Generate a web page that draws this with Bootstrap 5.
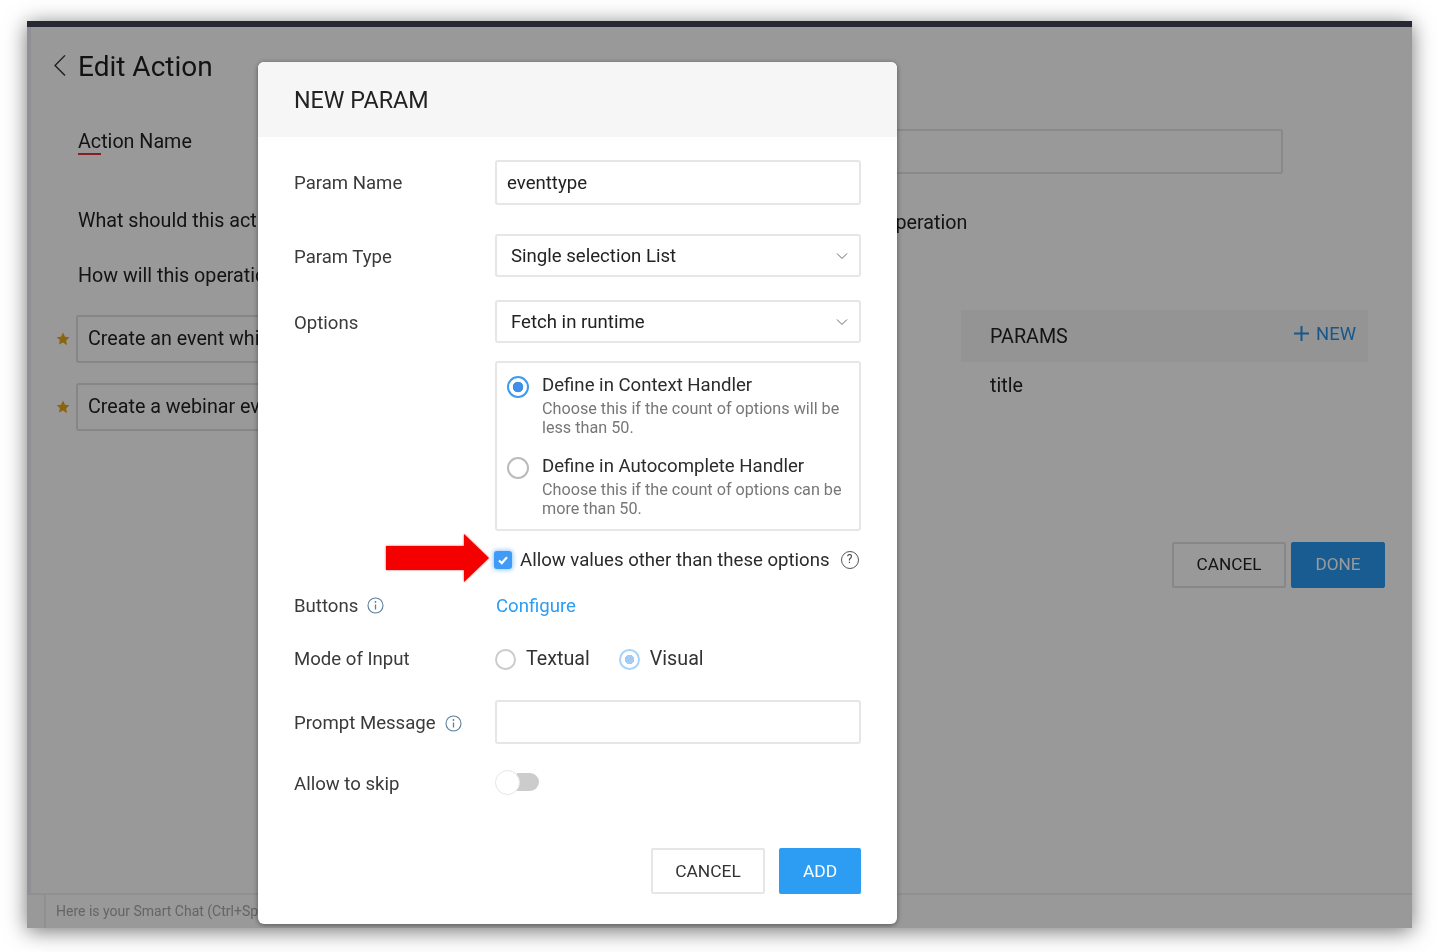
<!DOCTYPE html>
<html lang="en">
<head>
<meta charset="utf-8">
<title>New Param</title>
<link rel="stylesheet" href="https://cdn.jsdelivr.net/npm/bootstrap@5.3.0/dist/css/bootstrap.min.css">
<style>
html,body{height:100%;background:#fff;overflow:hidden}
body{font-family:Roboto,"Liberation Sans",sans-serif;font-size:18.6px;color:#333}
.app-window{position:relative;width:1385px;height:907px;margin:21px 0 0 27px;background:#fff;box-shadow:0 3px 20px rgba(0,0,0,.55);overflow:hidden;filter:blur(.4px)}
.top-strip{height:6px;background:#414355}
.app-main{height:866px;border-left:4px solid #eef0f8;padding-left:47px;color:#222;font-size:19.7px}
.page-head{height:79px;padding-top:23px;margin-left:-26px;gap:11px}
.page-head h1{font-size:28px;font-weight:400;line-height:34px;margin:0;color:#1f1f1f}
.bg-row-name{margin-top:23px;height:45px}
.bg-row-name .bg-input{margin-left:auto;margin-right:129px;width:950px;height:45px;border:2px solid #e4e4e4;border-radius:3px}
.name-label{line-height:24px;margin-top:1px}
.underlined{border-bottom:2px solid #e03535}
.bg-row-what{margin-top:35px;line-height:24px;height:24px}
.what-text{flex:0 0 804px;white-space:nowrap}
.bg-op{margin-top:2px}
.bg-row-how{margin-top:31px;line-height:24px;height:24px;white-space:nowrap}
.bg-split{margin-top:22px;margin-left:-22px}
.bg-left{width:230px}
.sample-row{height:48px;margin-top:5px;gap:6px;margin-bottom:20px}
.sample-star{flex:none;width:14px;height:14px}
.sample-box{flex:0 0 300px;height:48px;border:2px solid #e0e0e0;border-radius:3px;padding-left:10px;line-height:44px;white-space:nowrap}
.bg-right{margin-left:675px;width:407px}
.params-head{height:52px;background:#f7f7f9;padding:2px 12px 0 29px}
.params-new{color:#2a92e6;font-size:18.4px;gap:7px;margin-top:-6px}
.param-item{padding:12px 0 0 29px;line-height:24px}
.bg-actions{margin-top:91px;margin-right:27px;gap:5px}
.bg-actions .btn{height:46px;font-size:17.2px;border-radius:2px}
.btn-ghost{background:#fff;color:#222;border:2px solid #e2e2e2;width:114px}
.btn-done{background:#2a9af3;border-color:#2a9af3;color:#fff;width:94px}
.chat-bar{height:35px;border-top:2px solid #f0f0f0;color:#a8a8a8;font-size:14px}
.chat-cell{width:19px;border-right:2px solid #f0f0f0;height:100%}
.chat-text{padding-left:10px;line-height:33px;white-space:nowrap}
.dim-layer{position:absolute;inset:0;background:rgba(0,0,0,.4)}
.param-modal{position:absolute;left:231px;top:41px;width:639px;height:862px;background:#fff;border-radius:6px;box-shadow:0 1px 5px rgba(0,0,0,.45);overflow:hidden;color:#333}
.param-head{height:75px;background:#f6f6f6;padding-left:36px;font-size:23.3px;line-height:76px;color:#222}
.param-body{padding:0 36px}
.f-row{position:relative;display:flex;align-items:center}
.f-label{flex:0 0 201px;color:#3a3a3a;display:flex;align-items:center;gap:9px;line-height:24px}
.f-field{width:366px}
.mt-a{margin-top:23px}.mt-b{margin-top:29px}.mt-c{margin-top:18px}.mt-d{margin-top:19px}.mt-e{margin-top:23px}.mt-f{margin-top:29px}.mt-g{margin-top:29px}.mt-h{margin-top:28px}.mt-i{margin-top:52px}
.nudge{padding-top:2px}
.form-control.tx{height:45px;font-size:18.6px;color:#222;border:2px solid #e6e6e6;border-radius:3px;padding:0 10px;box-shadow:none}
.form-select.sel{height:43px;font-size:18.6px;color:#222;border:2px solid #e6e6e6;border-radius:3px;padding:2px 14px 0;background-size:12px 8px;background-position:right 11px center;background-image:url("data:image/svg+xml,%3csvg xmlns='http://www.w3.org/2000/svg' viewBox='0 0 12 8'%3e%3cpath fill='none' stroke='%23666' stroke-width='1' d='M1 1.5l5 5 5-5'/%3e%3c/svg%3e")}
.tx-h{height:44px!important}
.radio-box{height:170px;border:2px solid #e6e6e6;border-radius:3px;padding:11px 10px 0 10px}
.radio-item{display:flex;gap:13px;margin-bottom:18px}
.radio-title{font-size:18.6px;line-height:22px;color:#2b2b2b}
.radio-desc{font-size:16.2px;line-height:19px;color:#777;margin-top:3px}
.form-check-input.rd{flex:none;width:22px;height:22px;margin:2px 0 0;border:2px solid #bbb;background-color:#fff;box-shadow:none}
.form-check-input.rd:checked{border-color:#3f9bf0;background-color:#fff;background-image:radial-gradient(circle,#3f8fe8 0 5px,transparent 5.6px)}
.form-check-input.rd.rd-s{width:21px;height:21px;margin:0;border-color:#ccc}
.form-check-input.rd.rd-s:checked{border-color:#a9d2f8;background-image:radial-gradient(circle,#a5cbf3 0 4.5px,transparent 5px)}
.form-check-input.chk{flex:none;width:18px;height:18px;margin:0 8px 0 -1px;border:0;border-radius:3px;background-color:#3f9bf5;box-shadow:0 0 4px 1px rgba(63,155,245,.55);background-image:url("data:image/svg+xml,%3csvg xmlns='http://www.w3.org/2000/svg' viewBox='0 0 18 18'%3e%3cpath fill='none' stroke='%23fff' stroke-width='2.2' d='M5 9.5l2.8 2.6L13 6.3'/%3e%3c/svg%3e");background-size:18px 18px}
.allow-text{color:#2b2b2b;line-height:20px;white-space:nowrap}
.q-mark{flex:none;width:18px;height:18px;border:1.5px solid #555;border-radius:50%;font-size:12px;line-height:15px;text-align:center;color:#444;margin-left:11px}
.cfg-link{display:block;color:#2a9df4;text-decoration:none;margin-left:1px;padding-top:1px;line-height:24px}
.mode-opt{display:flex;align-items:center;gap:10px;margin-right:29px;line-height:24px;color:#333;font-size:19.7px}
.info-ic{flex:none;width:17px;height:17px}
.f-skip{margin-top:-4px}
.skip-wrap{height:24px;width:44px;position:relative}
.skip-track{position:absolute;left:22px;right:0;top:3px;height:18px;background:#ccc;border-radius:0 9px 9px 0}
.skip-knob{position:absolute;left:0;top:0;width:25px;height:25px;border-radius:50%;background:#fff;border:1.5px solid #e4e4e4}
.modal-actions{display:flex;justify-content:flex-end;gap:14px}
.modal-actions .btn{height:46px;font-size:17.4px;border-radius:2px}
.btn-c{width:114px;background:#fff;color:#333;border:2px solid #e6e6e6}
.btn-a{width:82px;background:#2d9cf3;color:#fff;border:0}
.red-arrow{position:absolute;left:92px;top:-16px;width:103px;height:48px;filter:drop-shadow(0 0 1px rgba(120,0,0,.6))}
</style>
</head>
<body>
<div class="app-window">
  <div class="top-strip"></div>
  <main class="app-main">
    <div class="page-head d-flex align-items-start">
      <svg width="15" height="22" viewBox="0 0 15 24" preserveAspectRatio="none" class="mt-1"><path d="M13 1.5 3 12.500l10 11" fill="none" stroke="#333" stroke-width="1.4"/></svg>
      <h1>Edit Action</h1>
    </div>
    <div class="bg-row-name d-flex align-items-start">
      <span class="name-label"><span class="underlined">Ac</span>tion Name</span>
      <div class="bg-input"></div>
    </div>
    <div class="bg-row-what d-flex align-items-start"><span class="what-text">What should this action do?</span><span class="bg-op">Operation</span></div>
    <div class="bg-row-how">How will this operation</div>
    <div class="bg-split d-flex">
      <div class="bg-left">
        <div class="sample-row d-flex align-items-center">
          <svg class="sample-star" viewBox="0 0 24 24"><path fill="#e5a817" d="M12 1l3.400 7.200 7.600 1-5.600 5.400 1.400 7.900L12 17.800 5.200 21.500l1.400-7.900L1 9.200l7.600-1z"/></svg>
          <div class="sample-box">Create an event which</div>
        </div>
        <div class="sample-row d-flex align-items-center">
          <svg class="sample-star" viewBox="0 0 24 24"><path fill="#e5a817" d="M12 1l3.400 7.200 7.600 1-5.600 5.400 1.400 7.900L12 17.800 5.200 21.500l1.400-7.900L1 9.200l7.600-1z"/></svg>
          <div class="sample-box">Create a webinar event</div>
        </div>
      </div>
      <div class="bg-right">
        <div class="params-head d-flex align-items-center justify-content-between">
          <span>PARAMS</span>
          <span class="params-new d-flex align-items-center"><svg width="15" height="15" viewBox="0 0 15 15"><path d="M7.500 0v15M0 7.500h15" stroke="#2a92e6" stroke-width="2"/></svg>NEW</span>
        </div>
        <div class="param-item">title</div>
      </div>
    </div>
    <div class="bg-actions d-flex justify-content-end">
      <button type="button" class="btn btn-ghost">CANCEL</button>
      <button type="button" class="btn btn-done">DONE</button>
    </div>
  </main>
  <div class="chat-bar d-flex">
    <div class="chat-cell"></div>
    <div class="chat-text">Here is your Smart Chat (Ctrl+Space)</div>
  </div>
  <div class="dim-layer"></div>

  <div class="param-modal">
    <div class="param-head">NEW PARAM</div>
    <div class="param-body">
      <div class="f-row mt-a">
        <label class="f-label">Param Name</label>
        <div class="f-field"><input class="form-control tx" type="text" value="eventtype"></div>
      </div>
      <div class="f-row mt-b">
        <label class="f-label nudge">Param Type</label>
        <div class="f-field"><select class="form-select sel"><option>Single selection List</option></select></div>
      </div>
      <div class="f-row mt-a">
        <label class="f-label nudge">Options</label>
        <div class="f-field"><select class="form-select sel"><option>Fetch in runtime</option></select></div>
      </div>
      <div class="f-row mt-c">
        <div class="f-label"></div>
        <div class="f-field radio-box">
          <div class="radio-item">
            <input class="form-check-input rd" type="radio" name="src" checked>
            <div><div class="radio-title">Define in Context Handler</div><div class="radio-desc">Choose this if the count of options will be less than 50.</div></div>
          </div>
          <div class="radio-item">
            <input class="form-check-input rd" type="radio" name="src">
            <div><div class="radio-title">Define in Autocomplete Handler</div><div class="radio-desc">Choose this if the count of options can be more than 50.</div></div>
          </div>
        </div>
      </div>
      <div class="f-row mt-d">
        <div class="f-label"></div>
        <div class="f-field d-flex align-items-center">
          <input class="form-check-input chk" type="checkbox" checked>
          <span class="allow-text">Allow values other than these options</span>
          <span class="q-mark">?</span>
        </div>
        <svg class="red-arrow" viewBox="0 0 103 48"><path fill="#f40000" d="M0 12h78V0l25 24-25 24V36H0z"/></svg>
      </div>
      <div class="f-row mt-e">
        <div class="f-label">Buttons
          <svg class="info-ic" viewBox="0 0 17 17"><circle cx="8.500" cy="8.500" r="7.500" fill="none" stroke="#5d7f99" stroke-width="1.100"/><path d="M8.500 7.500v5" stroke="#5d7f99" stroke-width="1.300"/><circle cx="8.500" cy="5" r=".9" fill="#5d7f99"/></svg>
        </div>
        <div class="f-field"><a class="cfg-link" href="#">Configure</a></div>
      </div>
      <div class="f-row mt-f">
        <div class="f-label">Mode of Input</div>
        <div class="f-field d-flex">
          <label class="mode-opt"><input class="form-check-input rd rd-s" type="radio" name="mode">Textual</label>
          <label class="mode-opt"><input class="form-check-input rd rd-s" type="radio" name="mode" checked>Visual</label>
        </div>
      </div>
      <div class="f-row mt-g">
        <label class="f-label nudge">Prompt Message
          <svg class="info-ic" viewBox="0 0 17 17"><circle cx="8.500" cy="8.500" r="7.500" fill="none" stroke="#5d7f99" stroke-width="1.100"/><path d="M8.500 7.500v5" stroke="#5d7f99" stroke-width="1.300"/><circle cx="8.500" cy="5" r=".9" fill="#5d7f99"/></svg>
        </label>
        <div class="f-field"><input class="form-control tx tx-h" type="text"></div>
      </div>
      <div class="f-row mt-h">
        <div class="f-label">Allow to skip</div>
        <div class="f-field f-skip"><div class="skip-wrap"><div class="skip-track"></div><div class="skip-knob"></div></div></div>
      </div>
      <div class="modal-actions mt-i">
        <button type="button" class="btn btn-c">CANCEL</button>
        <button type="button" class="btn btn-a">ADD</button>
      </div>
    </div>
  </div>
</div>
<script src="https://cdn.jsdelivr.net/npm/bootstrap@5.3.0/dist/js/bootstrap.bundle.min.js"></script>
</body>
</html>
